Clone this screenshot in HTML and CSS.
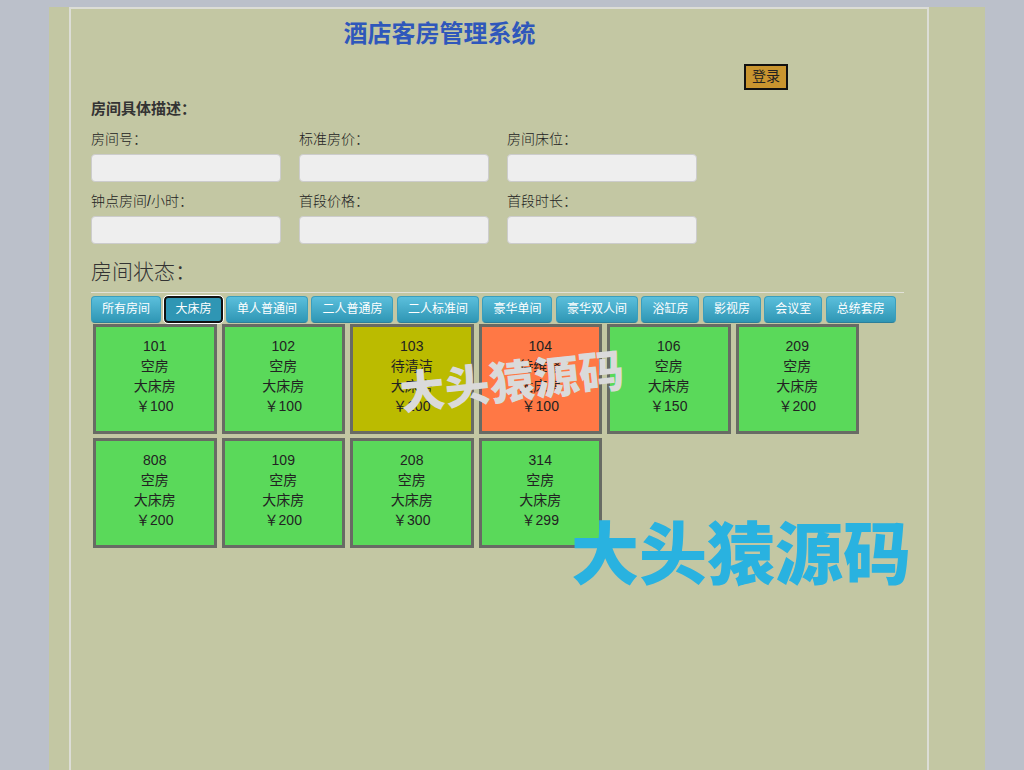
FILE: index.html
```html
<!DOCTYPE html>
<html lang="zh-CN">
<head>
<meta charset="utf-8">
<meta name="viewport" content="width=device-width, initial-scale=1">
<title>酒店客房管理系统</title>
<link rel="stylesheet" href="styles.css">
</head>
<body>
<div class="page">
  <main class="panel">
    <h1 class="title">酒店客房管理系统</h1>
    <div class="login-row"><button type="button" class="login">登录</button></div>

    <form class="details">
      <h2 class="details-title">房间具体描述：</h2>
      <div class="fields">
        <div class="field"><label for="room-no">房间号：</label><input id="room-no" type="text" readonly></div>
        <div class="field"><label for="price">标准房价：</label><input id="price" type="text" readonly></div>
        <div class="field"><label for="beds">房间床位：</label><input id="beds" type="text" readonly></div>
        <div class="field"><label for="hourly">钟点房间/小时：</label><input id="hourly" type="text" readonly></div>
        <div class="field"><label for="first-price">首段价格：</label><input id="first-price" type="text" readonly></div>
        <div class="field"><label for="first-time">首段时长：</label><input id="first-time" type="text" readonly></div>
      </div>
    </form>

    <section>
      <h2 class="status-title">房间状态：</h2>
      <div class="tabs">
        <button type="button" class="tab">所有房间</button>
        <button type="button" class="tab tab-active">大床房</button>
        <button type="button" class="tab">单人普通间</button>
        <button type="button" class="tab">二人普通房</button>
        <button type="button" class="tab">二人标准间</button>
        <button type="button" class="tab">豪华单间</button>
        <button type="button" class="tab">豪华双人间</button>
        <button type="button" class="tab">浴缸房</button>
        <button type="button" class="tab">影视房</button>
        <button type="button" class="tab">会议室</button>
        <button type="button" class="tab">总统套房</button>
      </div>
      <div class="rooms">
        <div class="room"><div>101</div><div>空房</div><div>大床房</div><div>￥100</div></div>
        <div class="room"><div>102</div><div>空房</div><div>大床房</div><div>￥100</div></div>
        <div class="room room-cleaning"><div>103</div><div>待清洁</div><div>大床房</div><div>￥100</div></div>
        <div class="room room-repair"><div>104</div><div>待维修</div><div>大床房</div><div>￥100</div></div>
        <div class="room"><div>106</div><div>空房</div><div>大床房</div><div>￥150</div></div>
        <div class="room"><div>209</div><div>空房</div><div>大床房</div><div>￥200</div></div>
        <div class="room"><div>808</div><div>空房</div><div>大床房</div><div>￥200</div></div>
        <div class="room"><div>109</div><div>空房</div><div>大床房</div><div>￥200</div></div>
        <div class="room"><div>208</div><div>空房</div><div>大床房</div><div>￥300</div></div>
        <div class="room"><div>314</div><div>空房</div><div>大床房</div><div>￥299</div></div>
      </div>
    </section>
    <div class="mark mark-grey">大头猿源码</div>
    <div class="mark mark-blue">大头猿源码</div>
  </main>
</div>
</body>
</html>
```
FILE: styles.css
```css
* {
  box-sizing: border-box;
}

body {
  display: flex;
  min-height: 100vh;
  margin: 0;
  padding: 7px 39px 0 49px;
  background: #bbc0ca;
  color: #333;
  font-family: "Liberation Sans", "Noto Sans CJK SC", sans-serif;
  font-size: 14px;
  line-height: 20px;
}

.page {
  display: flex;
  flex: 1;
  padding: 0 56px 0 20px;
  background: #c3c7a3;
}

.panel {
  position: relative;
  flex: 1;
  min-width: 0;
  padding: 4px 23px 0 20px;
  border: 2px solid #dcddd6;
  border-bottom: 0;
}

.title {
  margin: 0 116px 0 0;
  color: #2f57bb;
  font-size: 24px;
  line-height: 42px;
  text-align: center;
}

.login-row {
  display: flex;
  justify-content: flex-end;
  padding: 9px 116px 0 0;
}

.login {
  height: 26px;
  padding: 0 6px 2px;
  border: 2px solid #111;
  background: #c9952f;
  color: #222;
  font: inherit;
}

.details-title {
  margin: 9px 0 10px;
  font-size: 15px;
  line-height: 20px;
}

.fields {
  display: grid;
  grid-template-columns: repeat(3, 190px);
  gap: 9px 18px;
}

.field label {
  display: block;
  margin-bottom: 5px;
  color: #222;
  font-weight: 300;
}

.field input {
  display: block;
  width: 100%;
  height: 28px;
  border: 1px solid #ccc;
  border-radius: 4px;
  background: #eee;
}

.status-title {
  margin: 8px 0 3px;
  border-bottom: 1px solid #e2e2d8;
  font-size: 21px;
  font-weight: 300;
  line-height: 40px;
}

.tabs {
  display: flex;
  justify-content: space-between;
  margin-right: 8px;
}

.tab {
  height: 27px;
  padding: 0 10px 1px;
  border: 1px solid #3a9ebd;
  border-bottom-color: #2b7f9a;
  border-radius: 4px;
  background: linear-gradient(#5bbfdc, #2f96b4);
  color: #fff;
  font: inherit;
  font-size: 12px;
  white-space: nowrap;
}

.tab-active {
  padding: 0 9px 1px;
  border: 2px solid #111;
  background: #2f96b4;
  outline: 1px solid #fff;
}

.rooms {
  display: grid;
  grid-template-columns: repeat(6, 1fr);
  gap: 4px 5px;
  margin: 1px 45px 0 2px;
}

.room {
  padding: 9px 0 15px;
  border: 3px solid #686b64;
  background: #5ad95a;
  color: #222;
  text-align: center;
}

.room-cleaning {
  background: #bbbb00;
}

.room-repair {
  background: #ff7845;
}

.mark {
  position: absolute;
  font-family: "Noto Sans CJK SC", sans-serif;
  font-weight: 900;
  line-height: 1;
  white-space: nowrap;
  pointer-events: none;
}

.mark-grey {
  top: 347px;
  left: 328px;
  color: #dadada;
  font-size: 45px;
  transform: rotate(-6deg);
}

.mark-blue {
  top: 507px;
  left: 500px;
  color: #29b2e0;
  font-size: 68px;
}
```
